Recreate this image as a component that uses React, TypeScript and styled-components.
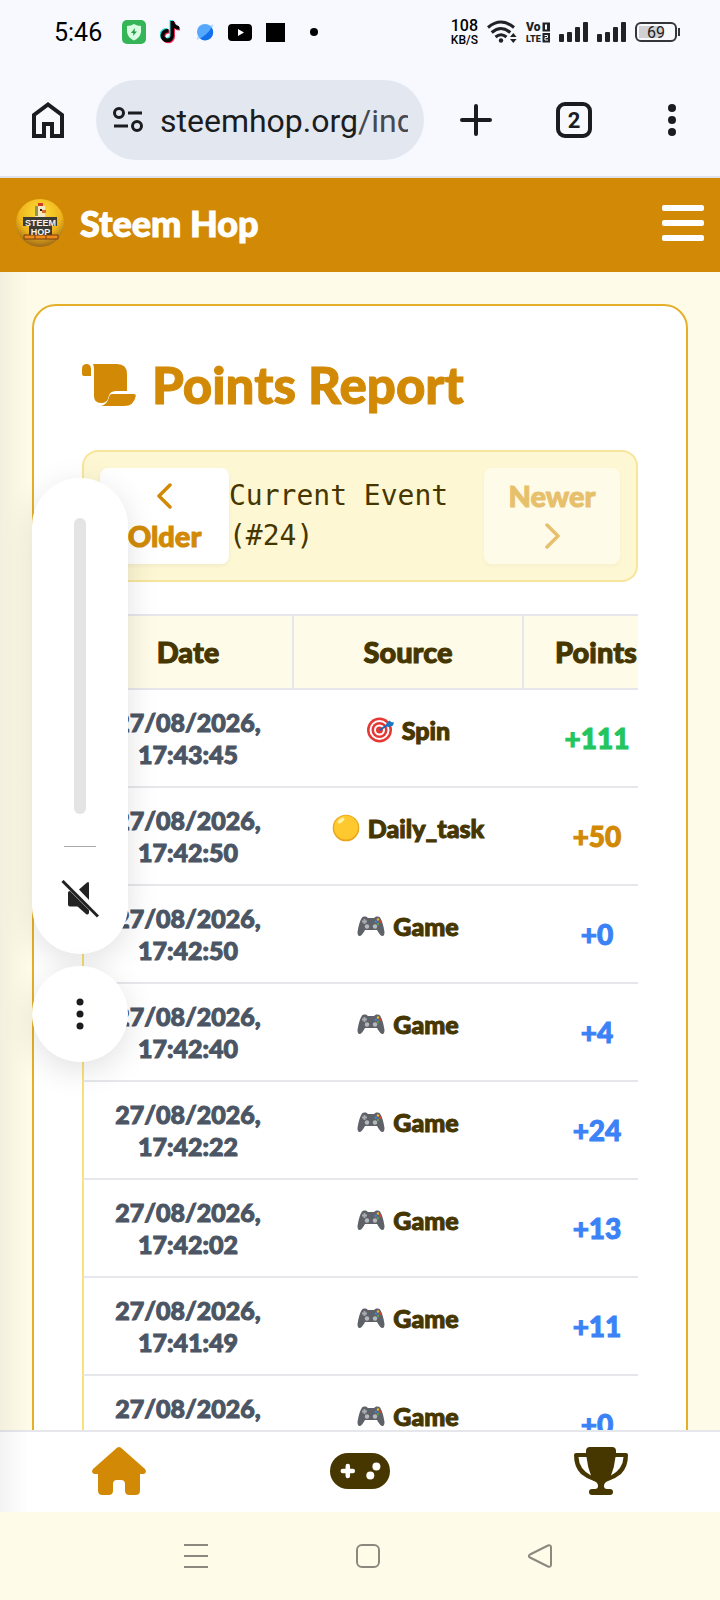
import React from "react";
import styled, { createGlobalStyle, css } from "styled-components";

const GlobalStyle = createGlobalStyle`
  * { box-sizing: border-box; }
  body { margin: 0; background: #fefbe8; }
  button { border: 0; padding: 0; margin: 0; background: none; font: inherit; color: inherit; cursor: pointer; }
  svg { display: block; flex: none; }
`;

const rounded = `"Lato", "Open Sans", sans-serif`;
const amber = "#d28a06";
const brown = "#463600";

/* Extra-heavy display lettering */
const heavy = css`
  font-weight: 900;
  -webkit-text-stroke: 1px currentColor;
`;

const Screen = styled.div`
  position: relative;
  display: flex;
  flex-direction: column;
  height: 100vh;
  overflow: hidden;
  font-family: ${rounded};
  color: ${brown};
`;

/* Phone status bar */
const StatusBar = styled.div`
  display: flex;
  flex: none;
  align-items: center;
  justify-content: space-between;
  height: 64px;
  padding: 0 43px 0 54px;
  background: #f7f9ff;
  color: #000;
  font-family: "Roboto", sans-serif;
`;
const StatusGroup = styled.div<{ $gap: number }>`
  display: flex;
  align-items: center;
  gap: ${(p) => p.$gap}px;
`;
const Clock = styled.time`
  margin-right: 6px;
  padding-top: 2px;
  font-size: 25px;
  line-height: 32px;
`;
const Dot = styled.span`
  width: 8px;
  height: 8px;
  margin-left: 11px;
  border-radius: 50%;
  background: #000;
`;
const Square = styled.span`
  width: 19px;
  height: 19px;
  background: #000;
`;
const Speed = styled.div`
  font-size: 12px;
  line-height: 12px;
  font-weight: 500;
  text-align: center;
`;
const SpeedValue = styled.div`
  font-size: 16px;
  line-height: 16px;
`;
const Battery = styled.div`
  position: relative;
  width: 42px;
  height: 20px;
  border: 2px solid #333539;
  border-radius: 6px;
  background: linear-gradient(90deg, #cfd1d5 0 68%, transparent 68%) 2px 2px / 34px 12px no-repeat;
  font-size: 16px;
  line-height: 17px;
  text-align: center;
  color: #222;
  &::after {
    content: "";
    position: absolute;
    right: -5px;
    top: 4px;
    width: 2px;
    height: 8px;
    background: #333539;
  }
`;

/* Browser toolbar */
const Toolbar = styled.div`
  display: flex;
  flex: none;
  align-items: center;
  gap: 2px;
  height: 114px;
  border-bottom: 2px solid #dfe2ec;
  background: #f7f9ff;
  color: #1b1c20;
`;
const ToolButton = styled.button`
  display: flex;
  flex: none;
  align-items: center;
  justify-content: center;
  width: 96px;
  height: 96px;
`;
const AddressBar = styled.button`
  display: flex;
  flex: 1;
  min-width: 0;
  align-items: center;
  gap: 17px;
  height: 80px;
  margin: 0 2px 0 -2px;
  padding: 0 16px 0 17px;
  border-radius: 40px;
  background: #e3e7f0;
  font-family: "Roboto", sans-serif;
  font-size: 32px;
  line-height: 40px;
`;
const Address = styled.span`
  flex: 1;
  padding-top: 2px;
  overflow: hidden;
  white-space: nowrap;
  text-align: left;
`;
const AddressPath = styled.span`
  color: #45484f;
`;
const TabCount = styled.span`
  display: flex;
  align-items: center;
  justify-content: center;
  width: 36px;
  height: 36px;
  border: 4px solid #1b1c20;
  border-radius: 9px;
  font-family: "Roboto", sans-serif;
  font-size: 22px;
  font-weight: 700;
`;

/* Site header */
const SiteHeader = styled.header`
  display: flex;
  flex: none;
  align-items: center;
  justify-content: space-between;
  height: 94px;
  padding: 0 16px 4px;
  background: ${amber};
  color: #fff;
`;
const Brand = styled.a`
  display: flex;
  align-items: center;
  gap: 16px;
  color: #fff;
  font-size: 36px;
  ${heavy}
  line-height: 48px;
  text-decoration: none;
`;
const MenuButton = styled.button`
  display: flex;
  flex-direction: column;
  gap: 9px;
`;
const MenuLine = styled.span`
  width: 42px;
  height: 6px;
  border-radius: 2px;
  background: #fff;
`;

/* Page content */
const Viewport = styled.div`
  position: relative;
  display: flex;
  flex: 1;
  flex-direction: column;
  min-height: 0;
  &::after {
    content: "";
    position: absolute;
    inset: 0 auto 0 0;
    width: 28px;
    background: linear-gradient(90deg, rgba(30, 30, 60, 0.05), transparent);
    pointer-events: none;
  }
`;
const Main = styled.main`
  flex: 1;
  min-height: 0;
  padding: 32px;
  overflow-y: auto;
  scrollbar-width: none;
  background: #fefbe8;
`;
const Card = styled.section`
  padding: 48px;
  border: 2px solid #e4b02a;
  border-radius: 24px;
  background: #fff;
`;
const Title = styled.h1`
  display: flex;
  align-items: center;
  gap: 16px;
  margin: 0 0 32px;
  padding-bottom: 2px;
  color: ${amber};
  font-size: 51px;
  ${heavy}
  line-height: 62px;
`;
const EventBar = styled.div`
  display: flex;
  align-items: center;
  justify-content: space-between;
  margin-bottom: 32px;
  padding: 16px;
  border: 2px solid #f7e59a;
  border-radius: 16px;
  background: #fef7d3;
`;
const EventName = styled.span`
  flex: 1;
  font-family: "DejaVu Sans Mono", monospace;
  font-size: 28px;
  line-height: 40px;
`;
const PageButton = styled.button<{ $width: number }>`
  display: flex;
  flex: none;
  flex-direction: column;
  align-items: center;
  width: ${(p) => p.$width}px;
  padding: 8px 0;
  border-radius: 8px;
  background: #fff;
  box-shadow: 0 2px 4px rgba(0, 0, 0, 0.05);
  color: ${amber};
  font-size: 29px;
  ${heavy}
  line-height: 40px;
  &:disabled {
    opacity: 0.5;
    color: ${amber};
    cursor: default;
  }
`;
const ChevronBox = styled.span`
  display: flex;
  align-items: center;
  height: 40px;
`;

const TableWrap = styled.div`
  overflow: hidden;
`;
const Table = styled.table`
  width: 588px;
  table-layout: fixed;
  border-collapse: separate;
  border-spacing: 0;
`;
const Head = styled.th<{ $width: number }>`
  width: ${(p) => p.$width}px;
  height: 76px;
  padding: 0;
  border: solid #e5e7eb;
  border-width: 2px 2px 2px 0;
  background: #fefbe8;
  font-size: 29px;
  ${heavy}
  line-height: 40px;
  text-align: center;
  &:first-child { border-left: 2px solid #f8e27a; }
`;
const Cell = styled.td`
  height: 98px;
  padding: 16px 0;
  border-bottom: 2px solid #e5e7eb;
  text-align: center;
`;
const DateCell = styled(Cell)`
  padding-right: 2px;
  border-left: 2px solid #f8e27a;
  color: #4b5563;
  font-size: 25px;
  ${heavy}
  line-height: 32px;
  vertical-align: top;
`;
const SourceCell = styled(Cell)`
  padding: 24px 2px 24px 0;
  font-size: 25px;
  ${heavy}
  line-height: 32px;
  vertical-align: top;
`;
const Source = styled.span`
  display: flex;
  align-items: center;
  justify-content: center;
  gap: 8px;
`;
const Points = styled(Cell)<{ $color: string }>`
  color: ${(p) => p.$color};
  font-size: 28px;
  ${heavy}
  line-height: 40px;
`;

/* Bottom navigation */
const BottomNav = styled.nav`
  display: flex;
  flex: none;
  justify-content: space-around;
  height: 82px;
  padding-bottom: 2px;
  border-top: 2px solid #e5e7eb;
  background: #fff;
`;
const NavLink = styled.a<{ $active?: boolean }>`
  display: flex;
  align-items: center;
  justify-content: center;
  color: ${(p) => (p.$active ? amber : brown)};
`;
const SystemNav = styled.div`
  display: flex;
  flex: none;
  align-items: center;
  justify-content: center;
  gap: 148px;
  height: 88px;
  padding-left: 16px;
  background: #fefbe8;
`;

/* Volume overlay */
const VolumeOverlay = styled.aside`
  position: absolute;
  top: 478px;
  left: 32px;
  display: flex;
  flex-direction: column;
  gap: 12px;
  width: 96px;
`;
const VolumePanel = styled.div`
  display: flex;
  flex-direction: column;
  align-items: center;
  height: 476px;
  padding-top: 40px;
  border-radius: 48px;
  background: #fff;
  box-shadow: 0 8px 32px rgba(0, 0, 0, 0.12);
`;
const VolumeSlider = styled.input`
  appearance: none;
  writing-mode: vertical-lr;
  direction: rtl;
  width: 12px;
  height: 296px;
  margin: 0;
  border-radius: 6px;
  background: #e4e4e4;
  &::-webkit-slider-thumb {
    appearance: none;
    width: 0;
    height: 0;
  }
`;
const Divider = styled.span`
  width: 32px;
  height: 1px;
  margin: 32px 0 33px;
  background: #aaa;
`;
const MoreButton = styled.button`
  display: flex;
  align-items: center;
  justify-content: center;
  height: 96px;
  border-radius: 50%;
  background: #fff;
  box-shadow: 0 8px 32px rgba(0, 0, 0, 0.12);
`;

const ShieldIcon = () => (
  <svg width="24" height="24" viewBox="0 0 24 24">
    <rect width="24" height="24" rx="5" fill="#35b558" />
    <path d="M12 4 Q15 6 19 6 V12 Q18 18 12 20.500 Q6 18 5 12 V6 Q9 6 12 4Z" fill="#d9fbe2" />
    <path d="M13 8 9 13 H11.500 L11 16 15 11.500 H12.500Z" fill="#1f9c45" />
  </svg>
);
const noteD = "M11.500 1 H15 Q15.500 5.500 20 6.200 V9.600 Q17 9.500 15 8 V15.500 A6.700 6.700 0 1 1 9.500 9 V12.700 A3 3 0 1 0 11.500 15.500Z";
const NoteIcon = () => (
  <svg width="22" height="24" viewBox="1 0 22 24">
    <path d={noteD} fill="#35ddd8" transform="translate(-1 -1)" />
    <path d={noteD} fill="#f6274f" transform="translate(1 1)" />
    <path d={noteD} fill="#050505" />
  </svg>
);
const PlanetIcon = () => (
  <svg width="18" height="20" viewBox="0 0 18 20">
    <ellipse cx="9" cy="10" rx="11" ry="2.500" fill="#b9dcff" transform="rotate(-42 9 10)" />
    <circle cx="9" cy="10" r="8" fill="#55a8fb" />
    <path d="M15.500 5.500 Q12 12 4 16.500 A8 8 0 0 0 15.500 5.500Z" fill="#1370ec" />
  </svg>
);
const PlayIcon = () => (
  <svg width="24" height="17" viewBox="0 0 24 17">
    <rect width="24" height="17" rx="4" fill="#000" />
    <path d="M10 5 16 8.500 10 12Z" fill="#fff" />
  </svg>
);
const WifiIcon = () => (
  <svg width="30" height="24" viewBox="0 0 30 24" fill="none" stroke="#202225" strokeWidth="3">
    <path d="M1 7.500 Q14 -3.500 27 7.500" />
    <path d="M4.700 12.500 Q14 4.500 23.300 12.500" />
    <path d="M8.500 17 Q14 12.500 19.500 17" />
    <circle cx="14" cy="20.500" r="2.200" fill="#202225" stroke="none" />
    <path d="M23 17 26.300 13 29.600 17Z M23 19 26.300 23 29.600 19Z" fill="#202225" stroke="none" />
  </svg>
);
const VolteIcon = () => (
  <svg width="24" height="21" viewBox="0 0 24 21" fontFamily="Roboto, sans-serif" fontWeight="900" fill="#202225">
    <text x="0" y="9" fontSize="12">Vo</text>
    <text x="0" y="20" fontSize="9">LTE</text>
    <path d="M16.500 0.500H24V9.500H16.500Z M16.500 11H24V20.500H16.500Z" />
    <path d="M20 2.500V7.500" stroke="#f7f9ff" strokeWidth="2" />
    <path d="M18.500 13.500H21.500V15.500H19V18H22" fill="none" stroke="#f7f9ff" />
  </svg>
);
const SignalIcon = () => (
  <svg width="29" height="20" viewBox="0 0 29 20" fill="#202225">
    <rect x="0" y="12" width="5" height="8" rx="1" />
    <rect x="8" y="10" width="5" height="10" rx="1" />
    <rect x="16" y="5" width="5" height="15" rx="1" />
    <rect x="24" y="0" width="5" height="20" rx="1" />
  </svg>
);
const BrowserHome = () => (
  <svg width="32" height="36" viewBox="0 0 32 36" fill="none" stroke="currentColor" strokeWidth="4">
    <path d="M2 34 V13 L16 2.500 30 13 V34 H20 V22 H12 V34Z" />
  </svg>
);
const TuneIcon = () => (
  <svg width="30" height="26" viewBox="0 0 30 26" fill="none" stroke="#1b1c20" strokeWidth="3">
    <circle cx="6" cy="6" r="4.500" />
    <path d="M15 6H29M1 19H15" />
    <circle cx="24" cy="19" r="4.500" />
  </svg>
);
const PlusIcon = () => (
  <svg width="32" height="32" viewBox="0 0 32 32" stroke="currentColor" strokeWidth="4" strokeLinecap="round">
    <path d="M2 16H30M16 2V30" />
  </svg>
);
const DotsIcon = ({ r }: { r: number }) => (
  <svg width="8" height="32" viewBox="0 0 8 32" fill="#1b1c20">
    <circle cx="4" cy="4" r={r} />
    <circle cx="4" cy="16" r={r} />
    <circle cx="4" cy="28" r={r} />
  </svg>
);
const Logo = () => (
  <svg width="48" height="48" viewBox="0 0 48 48" fontFamily="Liberation Sans, sans-serif" fontWeight="700">
    <defs>
      <radialGradient id="sun" cx="0.5" cy="0.3" r="0.75">
        <stop offset="0" stopColor="#ffdf3a" />
        <stop offset="0.6" stopColor="#eeb31b" />
        <stop offset="1" stopColor="#8b5a16" />
      </radialGradient>
    </defs>
    <circle cx="24" cy="24" r="24" fill="url(#sun)" />
    <path d="M22 4H27V8H22Z" fill="#cf3b1e" />
    <path d="M19 7H29V18H19Z" fill="#f4e6bd" />
    <path d="M19 7H22V17H19Z" fill="#8e9650" />
    <path d="M26 11H30V14H26Z" fill="#e0662a" />
    <path d="M24 10H26V12H24Z" fill="#222" />
    <path d="M7 18H41V27H36V36H13V27H7Z" fill="#3b3a33" />
    <path d="M8 36H42V40H8Z" fill="#f08a1b" stroke="#753d12" />
    <path d="M19 36V40M30 36V40" stroke="#753d12" />
    <g fill="#f6f3ea" stroke="none" textAnchor="middle" fontSize="9">
      <text x="24.500" y="27">STEEM</text>
      <text x="24.500" y="35.500">HOP</text>
    </g>
  </svg>
);
const ScrollIcon = () => (
  <svg width="54" height="42" viewBox="0 0 54 42" fill="currentColor">
    <path d="M0 4.500A4.500 4.500 0 0 1 9 4.500V12H2Q0 12 0 10Z" />
    <path d="M11 0H35Q45 0 45 10V27H34Q27.500 27 26.500 33Q25.500 39 19 39Q12 39 12 32V5Q12 2 11 0Z" />
    <path d="M30 30H52Q54 30 53.800 32Q52 42 42 42H19Q25 40.500 26.800 34Q27.500 30 30 30Z" />
  </svg>
);
const Chevron = ({ d }: { d: string }) => (
  <ChevronBox>
    <svg width="16" height="26" viewBox="0 0 16 26" fill="none" stroke="currentColor" strokeWidth="3.500" strokeLinecap="round" strokeLinejoin="round">
      <path d={d} />
    </svg>
  </ChevronBox>
);
const TargetIcon = () => (
  <svg width="28" height="28" viewBox="0 0 28 28">
    <circle cx="13.500" cy="14" r="12.500" fill="#e53835" />
    <circle cx="13.500" cy="14" r="10" fill="#fff" />
    <circle cx="13.500" cy="14" r="8" fill="#e53835" />
    <circle cx="13.500" cy="14" r="5.500" fill="#fff" />
    <circle cx="13.500" cy="14" r="3.500" fill="#e53835" />
    <path d="M14 14 22 8.500" stroke="#1565b8" strokeWidth="1.800" />
    <path d="M20 9 21 6.500 24 4.500 25 6 28 6.500 27 9.500 23 11 20.500 10.500Z" fill="#1976c5" />
  </svg>
);
const CoinIcon = () => (
  <svg width="28" height="28" viewBox="0 0 28 28">
    <circle cx="14" cy="14" r="13.300" fill="#eaa51c" />
    <circle cx="14" cy="13.500" r="12" fill="#fdc92f" />
    <ellipse cx="9" cy="6.500" rx="4" ry="2" fill="#fff1a0" transform="rotate(-38 9 6.500)" />
  </svg>
);
const ControllerIcon = () => (
  <svg width="28" height="22" viewBox="0 0 28 22">
    <path d="M5 2.500Q6 1 9 1.500L11 3H17L19 1.500Q22 1 23 2.500Q26 7 27.500 17Q27.500 21.500 25 21Q23 20.500 20 15H8Q5 20.500 3 21Q.5 21.500.5 17Q2 7 5 2.500Z" fill="#5e6268" />
    <path d="M7.500 4V9M5 6.500H10" stroke="#a9adb2" strokeWidth="1.800" />
    <circle cx="10" cy="11.500" r="2.200" fill="#b5b9bd" />
    <circle cx="18" cy="11.500" r="2.200" fill="#b5b9bd" />
    <circle cx="21" cy="4.500" r="1.200" fill="#f3b52f" />
    <circle cx="23.300" cy="6.800" r="1.200" fill="#d94136" />
    <circle cx="18.800" cy="6.800" r="1.200" fill="#3d83d8" />
    <circle cx="21" cy="9" r="1.200" fill="#57a04b" />
  </svg>
);
const HouseIcon = () => (
  <svg width="54" height="48" viewBox="0 0 54 48" fill="currentColor">
    <path d="M25 0.800Q27 -0.800 29 0.800L53 22Q54.500 24 53.500 25.700Q52.700 27 51 27H48V43.500Q48 48 43.500 48H37.500Q33 48 33 43.500V37Q33 33 29 33H25Q21 33 21 37V43.500Q21 48 16.500 48H10.500Q6 48 6 43.500V27H3Q1.300 27 .5 25.700Q-.5 24 1 22Z" />
  </svg>
);
const PadIcon = () => (
  <svg width="60" height="36" viewBox="0 0 60 36">
    <rect width="60" height="36" rx="18" fill="currentColor" />
    <path d="M17.800 13V23M12.800 18H22.800" stroke="#fff" strokeWidth="4.500" strokeLinecap="round" />
    <circle cx="40.300" cy="22.600" r="4" fill="#fff" />
    <circle cx="46.400" cy="13.500" r="4" fill="#fff" />
  </svg>
);
const TrophyIcon = () => (
  <svg width="54" height="48" viewBox="0 0 54 48" fill="currentColor">
    <path d="M16 0H38Q42 0 42 4V6H52Q54 6 54 8Q54 20 47 27Q41 32 33 34.500Q30 36 30 39Q30 42 33 42H36Q39 42 39 45Q39 48 36 48H18Q15 48 15 45Q15 42 18 42H21Q24 42 24 39Q24 36 21 34.500Q13 32 7 27Q0 20 0 8Q0 6 2 6H12V4Q12 0 16 0ZM4.500 10Q5 22 17 28.500Q13.500 20 12.500 10ZM49.500 10H41.500Q40.500 20 37 28.500Q49 22 49.500 10Z" fillRule="evenodd" />
  </svg>
);
const MuteIcon = () => (
  <svg width="38" height="38" viewBox="0 0 38 38" fill="#222">
    <path d="M7 12.500Q7 11 9 11L28 30V33Q27 35.500 25 34L16.500 26.500H9Q7 26.500 7 24.500Z" />
    <path d="M18 9.500 26 2.500Q28 1 28 3.500V20Z" />
    <path d="M1.500 1 37 36.500" stroke="#222" strokeWidth="3" />
  </svg>
);
const sysProps = { width: 24, height: 24, viewBox: "0 0 24 24", fill: "none", stroke: "#8b897f", strokeWidth: 2 };

const sources = {
  Spin: TargetIcon,
  Daily_task: CoinIcon,
  Game: ControllerIcon,
};
type Row = { time?: string; source: keyof typeof sources; points: string; color: string };
const blue = "#3b82f6";
const rows: Row[] = [
  { time: "17:43:45", source: "Spin", points: "+111", color: "#22c55e" },
  { time: "17:42:50", source: "Daily_task", points: "+50", color: amber },
  { time: "17:42:50", source: "Game", points: "+0", color: blue },
  { time: "17:42:40", source: "Game", points: "+4", color: blue },
  { time: "17:42:22", source: "Game", points: "+24", color: blue },
  { time: "17:42:02", source: "Game", points: "+13", color: blue },
  { time: "17:41:49", source: "Game", points: "+11", color: blue },
  { source: "Game", points: "+0", color: blue },
];

export default function App() {
  return (
    <Screen>
      <GlobalStyle />
      <StatusBar>
        <StatusGroup $gap={14}>
          <Clock>5:46</Clock>
          <ShieldIcon />
          <NoteIcon />
          <PlanetIcon />
          <PlayIcon />
          <Square />
          <Dot />
        </StatusGroup>
        <StatusGroup $gap={9}>
          <Speed>
            <SpeedValue>108</SpeedValue>
            KB/S
          </Speed>
          <WifiIcon />
          <VolteIcon />
          <SignalIcon />
          <SignalIcon />
          <Battery>69</Battery>
        </StatusGroup>
      </StatusBar>

      <Toolbar>
        <ToolButton aria-label="Home"><BrowserHome /></ToolButton>
        <AddressBar>
          <TuneIcon />
          <Address>steemhop.org<AddressPath>/ind</AddressPath></Address>
        </AddressBar>
        <ToolButton aria-label="New tab"><PlusIcon /></ToolButton>
        <ToolButton aria-label="Tabs"><TabCount>2</TabCount></ToolButton>
        <ToolButton aria-label="Browser menu"><DotsIcon r={4} /></ToolButton>
      </Toolbar>

      <SiteHeader>
        <Brand href="#"><Logo />Steem Hop</Brand>
        <MenuButton aria-label="Menu"><MenuLine /><MenuLine /><MenuLine /></MenuButton>
      </SiteHeader>

      <Viewport>
        <Main>
          <Card>
            <Title><ScrollIcon />Points Report</Title>
            <EventBar>
              <PageButton $width={129}><Chevron d="M13 2 2 13 13 24" />Older</PageButton>
              <EventName>Current Event (#24)</EventName>
              <PageButton $width={136} disabled>Newer<Chevron d="M3 2 14 13 3 24" /></PageButton>
            </EventBar>
            <TableWrap>
              <Table>
                <thead>
                  <tr>
                    <Head $width={212}>Date</Head>
                    <Head $width={230}>Source</Head>
                    <Head $width={146}>Points</Head>
                  </tr>
                </thead>
                <tbody>
                  {rows.map((row, i) => {
                    const Icon = sources[row.source];
                    return (
                      <tr key={i}>
                        <DateCell>27/08/2026,{row.time && <><br />{row.time}</>}</DateCell>
                        <SourceCell><Source><Icon />{row.source}</Source></SourceCell>
                        <Points $color={row.color}>{row.points}</Points>
                      </tr>
                    );
                  })}
                </tbody>
              </Table>
            </TableWrap>
          </Card>
        </Main>
        <BottomNav>
          <NavLink href="#home" aria-label="Home" $active><HouseIcon /></NavLink>
          <NavLink href="#games" aria-label="Games"><PadIcon /></NavLink>
          <NavLink href="#ranking" aria-label="Ranking"><TrophyIcon /></NavLink>
        </BottomNav>
      </Viewport>

      <SystemNav>
        <button aria-label="Recent apps">
          <svg {...sysProps}><path d="M0 1H24M0 12H24M0 23H24" /></svg>
        </button>
        <button aria-label="Home screen">
          <svg {...sysProps}><rect x="1" y="1" width="22" height="22" rx="5" /></svg>
        </button>
        <button aria-label="Back">
          <svg {...sysProps} strokeLinejoin="round"><path d="M2 10.500 20 1.500Q23 .5 23 3.500V20.500Q23 23.500 20 22.500L2 13.500Q-.5 12 2 10.500Z" /></svg>
        </button>
      </SystemNav>

      <VolumeOverlay>
        <VolumePanel>
          <VolumeSlider type="range" min="0" max="100" defaultValue="0" aria-label="Volume" />
          <Divider />
          <button aria-label="Unmute"><MuteIcon /></button>
        </VolumePanel>
        <MoreButton aria-label="More volume options"><DotsIcon r={3.5} /></MoreButton>
      </VolumeOverlay>
    </Screen>
  );
}
